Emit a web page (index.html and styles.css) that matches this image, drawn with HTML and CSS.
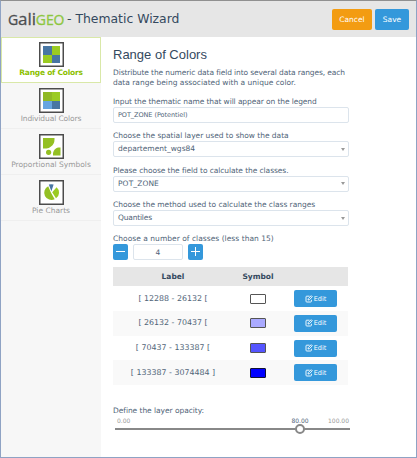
FILE: index.html
```html
<!DOCTYPE html>
<html lang="en">
<head>
<meta charset="utf-8">
<title>Thematic Wizard</title>
<link rel="stylesheet" href="styles.css">
</head>
<body>
<div class="window">
  <header class="header">
    <div class="brand"><span class="logo"><small>G</small>ali<b>GEO</b></span><span class="title">- Thematic Wizard</span></div>
    <button class="btn cancel">Cancel</button>
    <button class="btn save">Save</button>
  </header>
  <div class="body">
    <nav class="sidebar">
      <a class="item active">
        <svg viewBox="0 0 25 25"><rect x=".75" y=".75" width="23.5" height="23.5" fill="#fff" stroke="#4c4c4c" stroke-width="1.5"/><path fill="#4876a3" d="M4 4h9v9H4zM13 13h8v8h-8z"/><path fill="#9bcb22" d="M13 4h8v9h-8zM4 13h9v8H4z"/></svg>
        <span class="t-range">Range of Colors</span>
      </a>
      <a class="item">
        <svg viewBox="0 0 25 25"><rect x=".75" y=".75" width="23.5" height="23.5" fill="#fff" stroke="#4c4c4c" stroke-width="1.5"/><path fill="#90b925" d="M4 4h9v9H4z"/><path fill="#9bcb22" d="M13 4h8v9h-8z"/><path fill="#67a5e0" d="M4 13h9v8H4z"/><path fill="#4876a3" d="M13 13h8v8h-8z"/></svg>
        <span class="t-indiv">Individual Colors</span>
      </a>
      <a class="item">
        <svg viewBox="0 0 25 25"><rect x=".75" y=".75" width="23.5" height="23.5" fill="#fff" stroke="#4c4c4c" stroke-width="1.5"/><g fill="#94c023"><path d="M4 4h11.5v1.500Q15.500 10 12 12.500Q10 14.500 7.500 14.500H4z"/><circle cx="9.600" cy="18.300" r="2.600"/><path d="M14 21.500v-2.500Q15 14.500 19 13.500h2.500v8z"/></g></svg>
        <span class="t-prop">Proportional Symbols</span>
      </a>
      <a class="item">
        <svg viewBox="0 0 25 25"><rect x=".75" y=".75" width="23.5" height="23.5" fill="#fff" stroke="#4c4c4c" stroke-width="1.500"/><path fill="#94c023" d="M9.200 6.200L12 12.800L15.700 19.200A7.200 7.200 0 1 1 9.200 6.200z"/><path fill="#9bcb22" d="M13.200 12.200L17.600 7.200A7 7 0 0 1 17 18.300z"/><path fill="#4876a3" d="M9.800 4.600Q12.300 3.800 14.600 4.600L12.400 11.300z"/></svg>
        <span class="t-pie">Pie Charts</span>
      </a>
    </nav>
    <main class="main">
      <h1>Range of Colors</h1>
      <p class="intro"><span class="i1">Distribute the numeric data field into several data ranges, each</span><br><span class="i2">data range being associated with a unique color.</span></p>
      <div class="field">
        <label class="l1">Input the thematic name that will appear on the legend</label>
        <div class="box name">POT_ZONE (Potentiel)</div>
      </div>
      <div class="field">
        <label class="l2">Choose the spatial layer used to show the data</label>
        <div class="box"><span class="v1">departement_wgs84</span><i class="caret"></i></div>
      </div>
      <div class="field">
        <label class="l3">Please choose the field to calculate the classes.</label>
        <div class="box"><span class="v2">POT_ZONE</span><i class="caret"></i></div>
      </div>
      <div class="field">
        <label class="l4">Choose the method used to calculate the class ranges</label>
        <div class="box"><span class="v3">Quantiles</span><i class="caret"></i></div>
      </div>
      <div class="field classes">
        <label class="l5">Choose a number of classes (less than 15)</label>
        <div class="stepper">
          <button class="step"><svg viewBox="0 0 15 16"><path d="M3 7.500h9"/></svg></button>
          <div class="count">4</div>
          <button class="step"><svg viewBox="0 0 15 16"><path d="M3 7.500h9M7.500 3v9"/></svg></button>
        </div>
      </div>
      <div class="table">
        <div class="row head"><span>Label</span><span>Symbol</span><span></span></div>
        <div class="row"><span>[ 12288 - 26132 [</span><i class="swatch c1"></i><button class="edit"><svg viewBox="0 0 8 8"><path d="M4.500 1.200H1.700Q1 1.200 1 2v4.200q0 .8.8.8h3.800q.8 0 .8-.8V4.800M3 5l.3-1.400L6.200.7l1.100 1.100L4.400 4.700z"/></svg>Edit</button></div>
        <div class="row alt"><span>[ 26132 - 70437 [</span><i class="swatch c2"></i><button class="edit"><svg viewBox="0 0 8 8"><path d="M4.500 1.200H1.700Q1 1.200 1 2v4.200q0 .8.8.8h3.800q.8 0 .8-.8V4.800M3 5l.3-1.400L6.200.7l1.100 1.100L4.400 4.700z"/></svg>Edit</button></div>
        <div class="row"><span>[ 70437 - 133387 [</span><i class="swatch c3"></i><button class="edit"><svg viewBox="0 0 8 8"><path d="M4.500 1.200H1.700Q1 1.200 1 2v4.200q0 .8.8.8h3.800q.8 0 .8-.8V4.800M3 5l.3-1.400L6.200.7l1.100 1.100L4.400 4.700z"/></svg>Edit</button></div>
        <div class="row alt"><span>[ 133387 - 3074484 ]</span><i class="swatch c4"></i><button class="edit"><svg viewBox="0 0 8 8"><path d="M4.500 1.200H1.700Q1 1.200 1 2v4.200q0 .8.8.8h3.800q.8 0 .8-.8V4.800M3 5l.3-1.400L6.200.7l1.100 1.100L4.400 4.700z"/></svg>Edit</button></div>
      </div>
      <label class="l6">Define the layer opacity:</label>
      <div class="slider">
        <div class="scale"><span>0.00</span><span class="value">80.00</span><span>100.00</span></div>
        <div class="track"><i class="knob"></i></div>
      </div>
    </main>
  </div>
</div>
</body>
</html>
```

FILE: styles.css
```css
* { box-sizing: border-box; }
body { margin: 0; font: 7.5px/10px "DejaVu Sans", sans-serif; color: #506478; background: #fff; }
button { font-family: inherit; border: 0; padding: 0; margin: 0; color: #fff; border-radius: 2px; }
.window { width: 417px; height: 458px; border: 1px solid #8fa3c4; border-top-color: #909090; display: flex; flex-direction: column; overflow: hidden; }
.header { height: 36px; flex: none; background: #e6e6e6; display: flex; align-items: center; padding: 0 7px 0 7px; }
.brand { flex: 1; display: flex; align-items: center; white-space: nowrap; }
.logo { font: 17px/20px "Open Sans", sans-serif; color: #4c4e50; letter-spacing: -.1px; width: 59px; -webkit-text-stroke: .3px; }
.logo small { font-size: 14px; }
.logo b { font-size: 14px; font-weight: 400; color: #8dc63f; }
.title { font-size: 12.4px; line-height: 20px; color: #34495e; }
.btn { height: 21px; font-size: 7.5px; line-height: 21px; }
.cancel { width: 40px; background: #f39c12; margin-right: 3px; }
.save { width: 34px; background: #3498db; }

.body { flex: 1; display: flex; min-height: 0; }
.sidebar { width: 100px; background: #f7f7f7; display: flex; flex-direction: column; }
.item { height: 46px; border-bottom: 1px solid #efefef; display: flex; flex-direction: column; align-items: center; padding: 5px 0 0; color: #999; white-space: nowrap; }
.item svg { width: 25px; height: 25px; display: block; flex: none; }
.item span { line-height: 12px; }
.item.active { background: #fff; border: 1px solid #d9e8a8; padding-top: 4px; color: #8cc000; font-weight: 700; }
.t-range { letter-spacing: -.22px; }
.t-indiv { letter-spacing: -.1px; }

.main { width: 248px; padding: 10px 0 0 12px; white-space: nowrap; }
h1 { margin: 0; font: 13px/15px "Liberation Sans", sans-serif; color: #34495e; }
.intro { margin: 6px 0 9px; height: 20px; }
.i1 { letter-spacing: -.115px; }
.l1 { letter-spacing: -.1px; }
.l2 { letter-spacing: -.03px; }
.l3 { letter-spacing: -.08px; }
.l4 { letter-spacing: -.04px; }
.l5 { letter-spacing: .03px; }
.v2 { letter-spacing: .1px; }
.v3 { letter-spacing: -.2px; }
.field { height: 34.350px; }
.field label { display: block; height: 10px; }
.box { height: 16px; border: 1px solid #dce4ec; border-radius: 2px; padding: 0 4px; line-height: 14px; display: flex; justify-content: space-between; align-items: center; background: #fff; }
.box.name { font-size: 6.500px; letter-spacing: -.05px; }
.caret { border: 2px solid transparent; border-top: 3px solid #999; border-bottom: 0; margin-right: -1px; }
.stepper { display: flex; gap: 5px; }
.step { width: 15px; height: 16px; background: #3498db; }
.step svg { display: block; width: 15px; height: 16px; stroke: #fff; }
.count { width: 50px; height: 16px; border: 1px solid #dce4ec; border-radius: 2px; text-align: center; line-height: 15px; }
.classes { height: 33px; }

.table { width: 235px; margin-bottom: 21px; }
.row { display: grid; grid-template-columns: 120px 50px 65px; height: 24.700px; align-items: center; justify-items: center; font-size: 7.9px; }
.head { height: 19px; background: #e6e6e6; color: #34495e; font-size: 7.5px; font-weight: 700; }
.alt { background: #f9f9f9; }
.swatch { width: 16px; height: 10px; border: 1px solid #555; border-radius: 1px; }
.c1 { background: #fff; }
.c2 { background: #aaf; }
.c3 { background: #55f; }
.c4 { background: #00f; border-color: #113; }
.edit { width: 43px; height: 17px; background: #3498db; font-size: 6.500px; display: flex; align-items: center; justify-content: center; gap: 1px; justify-self: start; margin-left: 11px; }
.edit svg { width: 8px; height: 8px; fill: none; stroke: #fff; stroke-width: .9; }

.l6 { display: block; letter-spacing: -.05px; }
.slider { width: 235px; margin-left: 2px; }
.scale { display: grid; grid-template-columns: 160px 50px 24px; font-size: 6px; line-height: 10px; color: #999; }
.scale span:first-child { padding-left: 2px; }
.scale .value { text-align: center; color: #506478; }
.scale span:last-child { justify-self: end; }
.track { height: 2px; margin-top: 2px; background: #888; position: relative; }
.knob { position: absolute; left: 180px; top: -4px; width: 10px; height: 10px; border: 2px solid #888; border-radius: 50%; background: #fff; }
```
